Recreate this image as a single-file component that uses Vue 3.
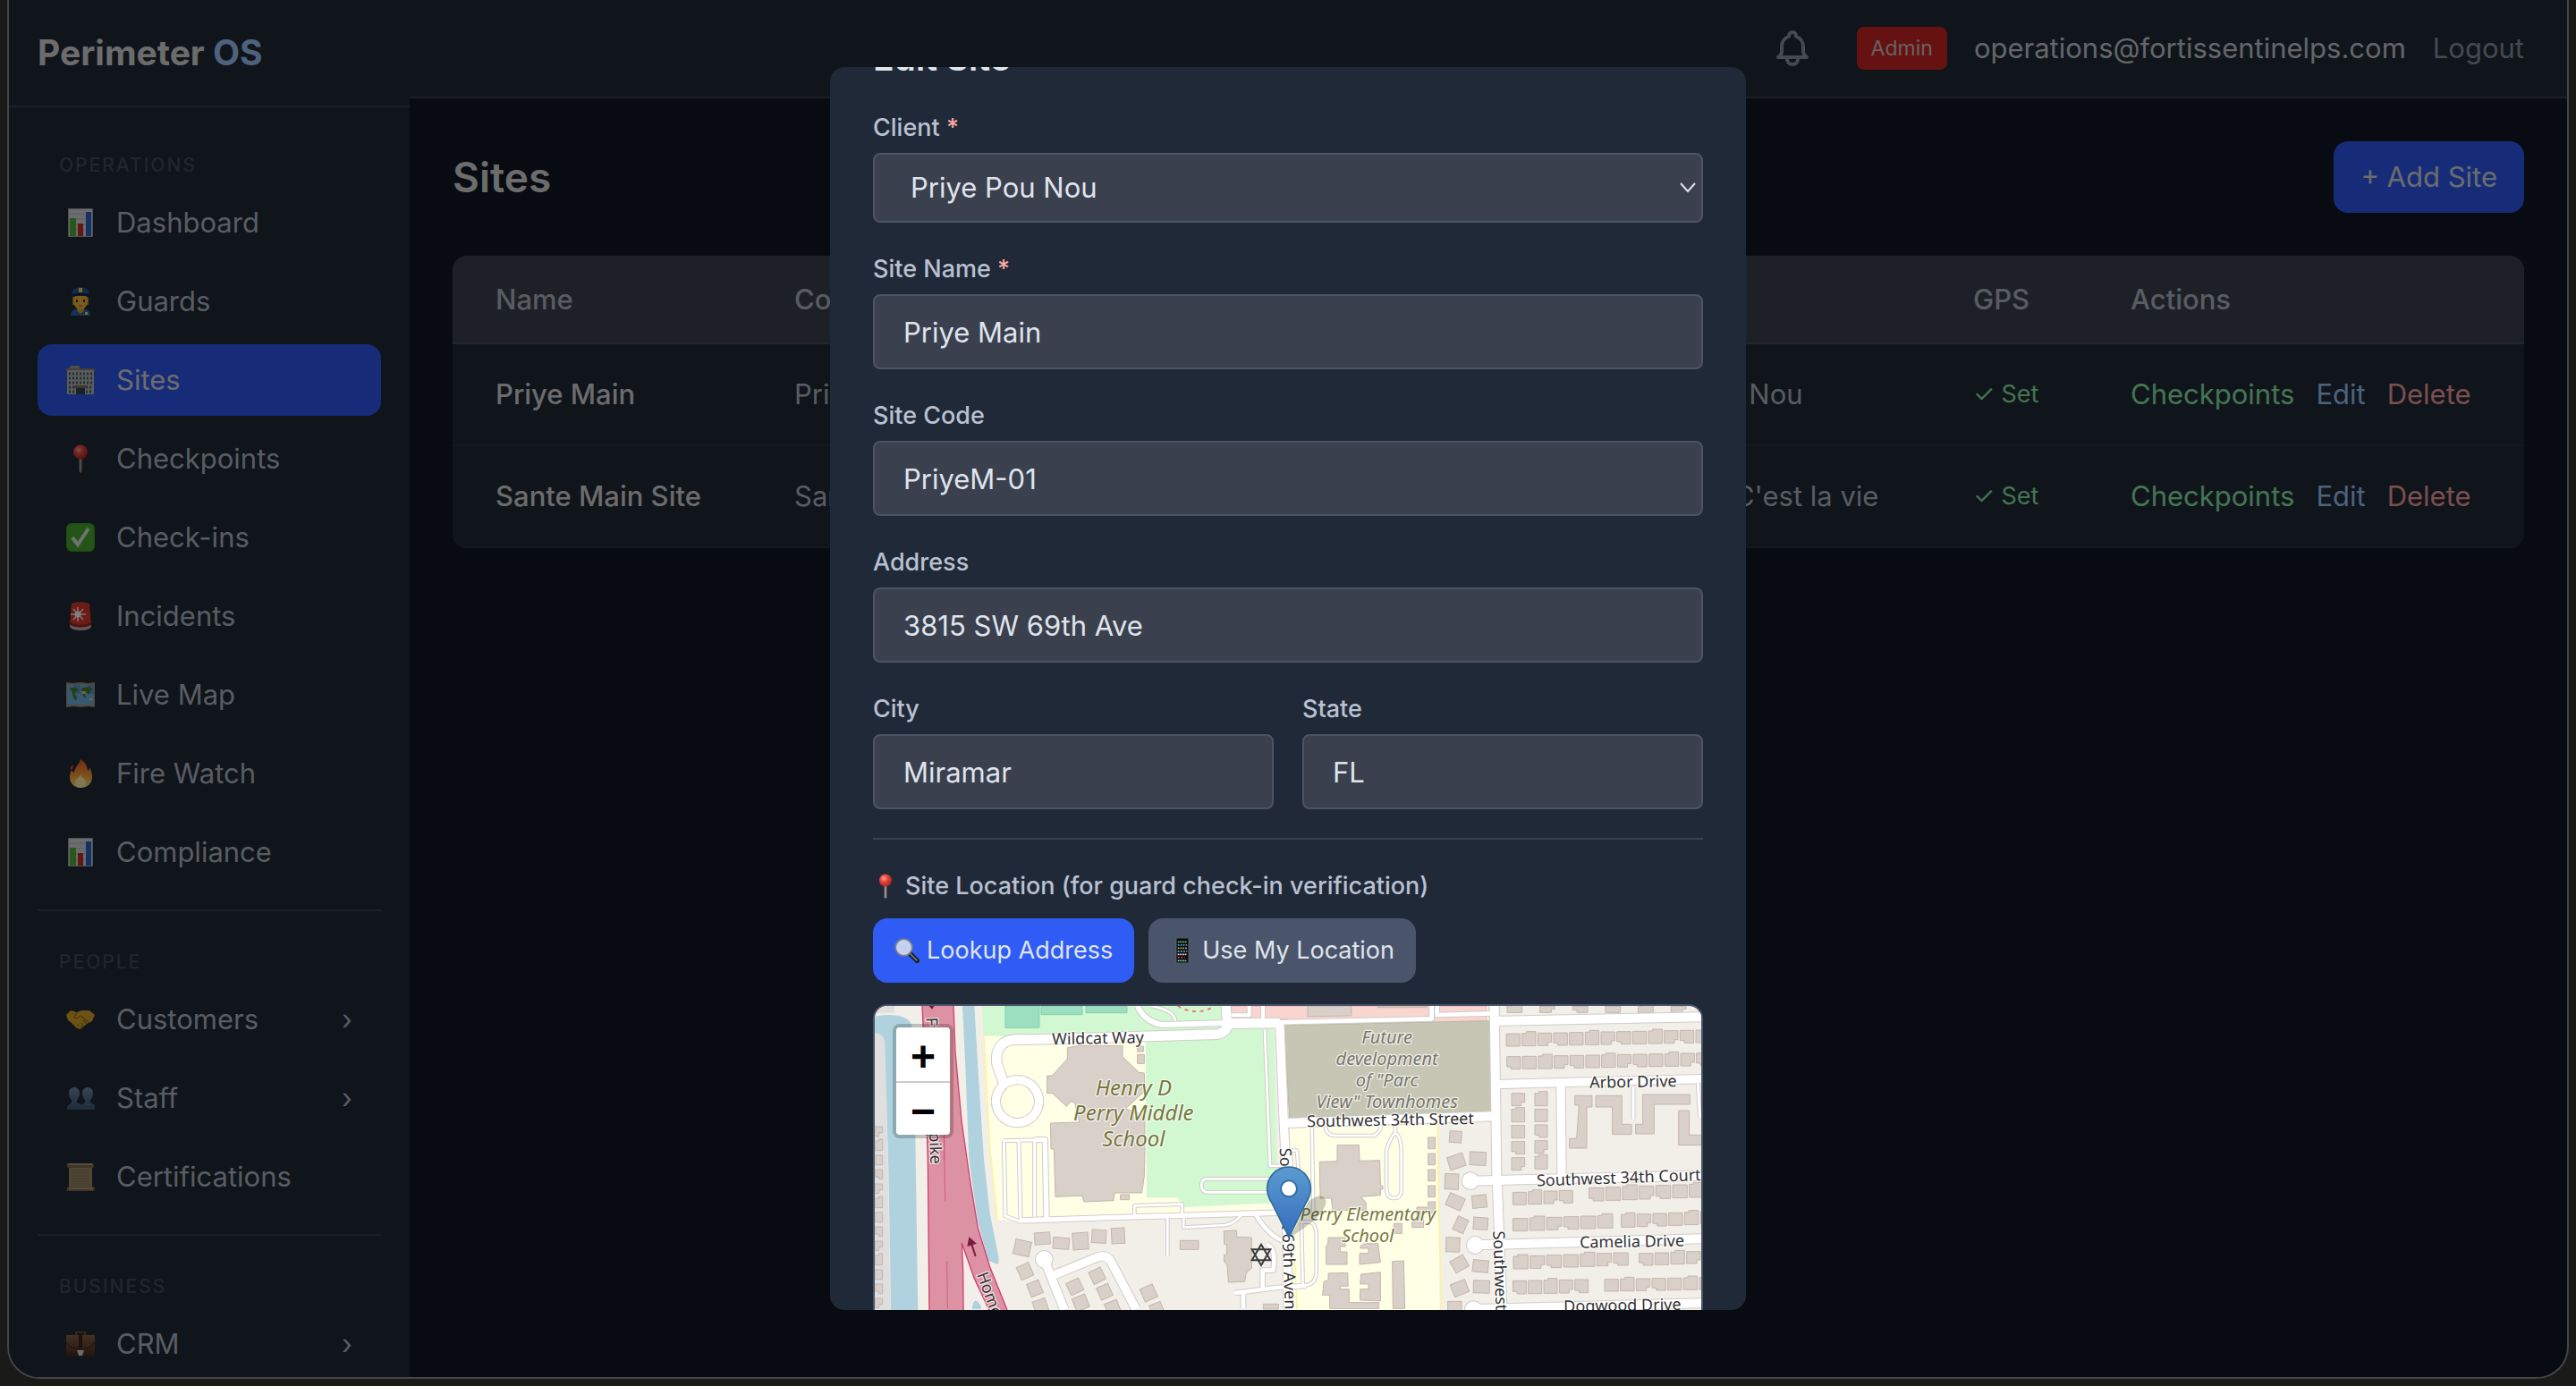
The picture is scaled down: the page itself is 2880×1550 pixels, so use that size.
<script setup>
import { ref, onMounted } from 'vue'

const modal = ref(null)
const form = ref({
  client: 'Priye Pou Nou',
  name: 'Priye Main',
  code: 'PriyeM-01',
  address: '3815 SW 69th Ave',
  city: 'Miramar',
  state: 'FL',
})

onMounted(() => {
  modal.value.scrollTop = 88
})

const sections = [
  {
    title: 'Operations',
    items: [
      { label: 'Dashboard', icon: 'chart' },
      { label: 'Guards', icon: 'guard' },
      { label: 'Sites', icon: 'building', active: true },
      { label: 'Checkpoints', icon: 'pin' },
      { label: 'Check-ins', icon: 'check' },
      { label: 'Incidents', icon: 'siren' },
      { label: 'Live Map', icon: 'worldmap' },
      { label: 'Fire Watch', icon: 'fire' },
      { label: 'Compliance', icon: 'chart' },
    ],
  },
  {
    title: 'People',
    items: [
      { label: 'Customers', icon: 'handshake', children: true },
      { label: 'Staff', icon: 'people', children: true },
      { label: 'Certifications', icon: 'scroll' },
    ],
  },
  {
    title: 'Business',
    items: [{ label: 'CRM', icon: 'briefcase', children: true }],
  },
]

const sites = [
  { name: 'Priye Main', code: 'PriyeM-01', client: 'Priye Pou Nou' },
  { name: 'Sante Main Site', code: 'SanteM-01', client: "Sante — C'est la vie" },
]

// Map geometry: [path, road width]
const roads = [
  ['M485 300L464 240C455 180 490 158 530 158L650 156L1200 140Q1236 135 1240 100', 32],
  ['M1232 45L1236 104', 30],
  ['M935 45Q960 100 1020 108L1240 102', 18],
  ['M980 45Q1060 60 1062 95', 8],
  ['M1240 104L1412 102', 32],
  ['M1310 45V76H1250M1356 45V90', 12],
  ['M533 293A72 72 0 1 1 532 293', 28],
  ['M1412 95L1426 440L1434 600L1440 1060', 28],
  ['M1412 100L1922 88V45', 14],
  ['M1940 45V75L2130 70', 14],
  ['M1426 438L2130 415', 30],
  ['M2132 45L2140 600L2158 1060', 30],
  ['M2130 96L2830 82', 30],
  ['M2130 308L2830 290', 28],
  ['M2355 310L2358 615', 28],
  ['M2052 632L2830 614', 30],
  ['M2068 847L2830 826', 30],
  ['M2068 1062L2830 1042', 30],
  ['M540 765L840 755L1430 738', 16],
  ['M485 497L590 494V752M537 500L543 762M487 497L492 750L540 768', 9],
  ['M590 494H625L630 760', 16],
  ['M925 745V715L1085 710V740', 8],
  ['M1036 750V885M1090 750V788L1230 780Q1260 775 1282 748', 8],
  ['M622 895L690 1065', 28],
  ['M650 950L800 888Q835 875 850 910L930 1062', 28],
  ['M1390 625H1165Q1148 628 1150 650Q1152 670 1170 670H1390', 8],
  ['M1362 125L1380 582L1450 580V530H1470L1475 600', 8],
  ['M1330 742Q1370 810 1420 832', 14],
  ['M1260 1008L1400 990L1500 984M1290 1005V1060', 14],
  ['M1355 1000V932H1390Q1402 860 1370 845', 14],
  ['M1565 450Q1570 480 1600 480H1730Q1755 460 1750 448M1520 440L1525 740', 8],
  ['M1770 640V530Q1785 480 1800 472Q1818 480 1820 530V670Q1815 690 1795 690Q1770 690 1770 650V640M1800 475V445', 8],
  ['M1485 770L1490 980M1485 770H1515Q1535 780 1535 810V940Q1530 985 1490 982L1460 985', 8],
  ['M2598 318V425M2815 305L2822 420', 9],
]

const culs = [
  [622, 895],
  [2052, 632],
  [2068, 847],
  [2062, 1064],
]

const bigBuildings = [
  'M700 185L740 178H885V215L940 268L958 270L960 330L895 390L960 412V540L958 615L950 672H858L855 698L755 702L750 682L660 685L655 525H645L643 438L740 435L725 370L712 365L697 382L650 338H632V280L650 278L700 222Z',
  'M935 180H955V198H935ZM935 208H958V238H935ZM878 678H908V695H878Z',
  'M1605 512H1678L1680 565L1748 563L1750 645L1758 650V660H1750V680L1685 685L1702 705V730H1590L1585 690H1548L1546 568L1605 566Z',
  'M1575 822H1632V852H1615V870H1638V912H1568V850Q1575 848 1575 822ZM1682 858Q1682 845 1700 842H1742L1750 905L1680 912V875H1710V858Z',
  'M1575 942L1640 940L1642 985H1615V995H1645V1040H1745V1060H1580V1015H1556L1560 970L1575 965ZM1685 945L1750 938V1035L1682 1032V995H1710V978H1682Z',
  'M1790 902L1828 900L1832 1060H1792ZM1872 720H1905V740H1895V788H1856V768H1872ZM1795 775H1822V808H1795Z',
  'M1225 800L1268 798V820L1318 822V925L1300 940L1295 970L1240 972L1236 912L1226 905V880L1235 878V845H1226Z',
  'M1078 832H1140V862H1078ZM1357 1045H1408V1062H1357Z',
  'M2402 346H2460V384H2442V522H2384V490H2408L2416 378H2402ZM2472 346H2560V442H2592V476H2528V384H2472ZM2630 342H2788V375H2668V474H2606V442H2630ZM2750 396H2786V478H2830V512H2750Z',
  'M1506 45H1652V78L1506 80ZM1740 45H1905V50H1740Z',
]

// Rows of detached houses: [x, y, step, count, height, slope]
const rows = [
  [2175, 45, 110, 6, 22, 0],
  [2172, 138, 53, 13, 42, -1],
  [2174, 215, 53, 13, 42, -1],
  [2194, 670, 52, 4, 42, -2],
  [2450, 655, 56, 7, 44, -2],
  [2194, 758, 57, 6, 42, -2],
  [2558, 745, 53, 6, 42, -2],
  [2196, 885, 56, 7, 42, -2],
  [2618, 875, 53, 5, 40, -2],
  [2194, 967, 52, 5, 44, -1],
  [2502, 962, 53, 7, 40, -1],
]
const shapes = [
  (w, h) => `h${w}v${h - 12}h-12v12h-${w - 12}z`,
  (w, h) => `v${h}h${w}v-${h + 6}h-${w - 14}v6z`,
  (w, h) => `h${w}v${h}h-${w}z`,
  (w, h) => `v${h - 8}h14v8h${w - 14}v-${h}z`,
]
const houses = []
rows.forEach(([x, y, step, count, h, slope]) => {
  for (let i = 0; i < count; i++) {
    houses.push(`M${x + i * step} ${y + i * slope}${shapes[(i * 7 + y) % 4](Math.min(step - 7, 50), h)}`)
  }
})
for (let i = 0; i < 5; i++) {
  houses.push(`M2190 ${338 + i * 54}${shapes[i % 4](44, 42)}`)
  houses.push(`M2268 ${338 + i * 53}${shapes[(i + 1) % 4](42, 42)}`)
}
for (let i = 0; i < 5; i++) houses.push(`M1910 ${486 + i * 54}h24v38h-24z`)
for (let i = 0; i < 13; i++) houses.push(`M54 ${450 + i * 48}${shapes[i % 4](26, 32)}`)

// Houses turned to follow the street: [x, y, w, h, angle]
const turned = [
  [522, 832, 54, 50, 12], [590, 805, 52, 40, -4], [652, 822, 54, 38, 4], [718, 806, 52, 56, -4],
  [782, 796, 48, 44, 4], [848, 790, 44, 52, -3], [536, 912, 44, 46, -24], [570, 970, 42, 46, -22],
  [588, 1030, 44, 44, -20], [702, 965, 46, 44, -26], [722, 1018, 46, 46, -22], [778, 928, 44, 44, -26],
  [804, 982, 42, 44, -24], [830, 1036, 44, 44, -22], [950, 985, 46, 46, -24], [980, 1042, 40, 40, -22],
  [1982, 465, 40, 38, 4], [1978, 545, 54, 44, -18], [2050, 535, 54, 44, 3], [1966, 608, 46, 52, 2],
  [1974, 680, 54, 44, 24], [2058, 680, 48, 42, -6], [2000, 755, 38, 48, 24], [2062, 755, 48, 40, 4],
  [1970, 822, 46, 48, 2], [1990, 888, 50, 44, -30], [2060, 898, 52, 40, 6], [1990, 970, 52, 44, -22],
  [2062, 966, 54, 42, 2], [1976, 1036, 46, 40, 0],
]

const labels = [
  { x: 803, y: 172, t: 'Wildcat Way', r: -1 },
  { x: 1784, y: 446, t: 'Southwest 34th Street', r: -1 },
  { x: 2598, y: 318, t: 'Arbor Drive', r: -1 },
  { x: 2550, y: 640, t: 'Southwest 34th Court', r: -2 },
  { x: 2594, y: 854, t: 'Camelia Drive', r: -1 },
  { x: 2562, y: 1068, t: 'Dogwood Drive', r: -1 },
]
</script>

<template>
  <svg class="sprite" aria-hidden="true">
    <defs>
      <linearGradient id="gFire" x1="0" y1="0" x2="0" y2="1">
        <stop offset="0" stop-color="#f0502a" /><stop offset=".55" stop-color="#fb9a34" /><stop offset="1" stop-color="#ffe27a" />
      </linearGradient>
      <linearGradient id="gPeople" x1="0" y1="0" x2="0" y2="1">
        <stop offset="0" stop-color="#6f8ba3" /><stop offset="1" stop-color="#3a5676" />
      </linearGradient>
      <radialGradient id="gBall" cx=".38" cy=".35" r=".7">
        <stop offset="0" stop-color="#ff9a8c" /><stop offset=".45" stop-color="#e0433b" /><stop offset="1" stop-color="#a82222" />
      </radialGradient>
      <linearGradient id="gCase" x1="0" y1="0" x2="0" y2="1">
        <stop offset="0" stop-color="#8a6248" /><stop offset="1" stop-color="#43281b" />
      </linearGradient>
      <linearGradient id="gMarker" x1="0" y1="0" x2="0" y2="1">
        <stop offset="0" stop-color="#5b9bd0" /><stop offset="1" stop-color="#356dbf" />
      </linearGradient>
    </defs>
    <symbol id="chart" viewBox="0 0 32 32">
      <path fill="#d4d8de" stroke="#9a9fa8" d="M2.500.5h27v31h-27z" />
      <path stroke="#b4bac4" d="M3 6h26M3 12h26M3 18h26M3 24h26" />
      <path fill="#4fae35" d="M4 11h7v20H4z" /><path fill="#c62b23" d="M13 17h6v14h-6z" /><path fill="#2a62c8" d="M22 4h6v27h-6z" />
    </symbol>
    <symbol id="guard" viewBox="0 0 32 32">
      <path fill="#2c62a8" d="M5 32c0-6 4-8 11-8s11 2 11 8z" /><path fill="#d99f26" d="M12 21h8v5l-4 4-4-4z" />
      <path fill="#b07f22" d="M7 10h18v10H7z" /><ellipse cx="16" cy="16" rx="8" ry="9" fill="#f2b937" />
      <path fill="#24549a" d="M6 6c2-4 6-6 10-6s8 2 10 6l-2 4H8z" /><path fill="#12254a" d="M7 8c6-2 12-2 18 0v3c-6-2-12-2-18 0z" />
      <path fill="#f6d24a" d="M14 1h4v5h-4z" /><path stroke="#3a2b14" stroke-width="2" d="M12 14v3M20 14v3" /><path stroke="#8a5a1c" d="M14 21h4" />
      <path fill="#f6d24a" d="M21 28h3v3h-3z" />
    </symbol>
    <symbol id="building" viewBox="0 0 32 32">
      <path fill="#9b9a98" d="M4 0h11v4H4z" /><path fill="#8a7f7a" d="M0 3h32v3H0z" /><path fill="#b9b6ae" d="M1 5h30v27H1z" />
      <path stroke="#44607c" stroke-width="3" stroke-dasharray="2 2" d="M3 9h27M3 14h27M3 19h27M3 24h7M22 24h8M3 29h7M22 29h8" />
      <path fill="#7d6f68" d="M9 22h14v3H9z" /><path fill="#33434f" d="M11 25h10v7H11z" />
    </symbol>
    <symbol id="pin" viewBox="0 0 32 32">
      <path fill="#9b8f8c" d="M14.500 14h3v16l-1.500 2-1.500-2z" /><circle cx="16" cy="8.500" r="8" fill="url(#gBall)" />
    </symbol>
    <symbol id="check" viewBox="0 0 32 32">
      <rect width="32" height="32" rx="6" fill="#3f9b28" /><rect x="1.500" y="1.500" width="29" height="29" rx="5" fill="#4ba831" />
      <path fill="none" stroke="#e2e2e2" stroke-width="4" d="M7 16l6 8L25 6" />
    </symbol>
    <symbol id="siren" viewBox="0 0 32 32">
      <path fill="#b9b4b2" d="M4 24h24v4q-2 4-12 4T4 28z" /><path fill="#d6392c" d="M6 2q10-4 20 0l2 23q-12 6-24 0z" />
      <path fill="#a42119" d="M4 23q12 6 24 0v3q-12 5-24 0z" />
      <path stroke="#ffe9e4" stroke-width="1.600" d="M13 6v16M5 14h17M8 8l11 12M19 8L8 20" /><circle cx="13" cy="14" r="3.500" fill="#fff" />
    </symbol>
    <symbol id="worldmap" viewBox="0 0 32 32">
      <path fill="#a58d6a" d="M0 2l8 1 8-1 8 1 8-1v28l-8-1-8 1-8-1-8 1z" /><path fill="#6fb0dc" d="M1 4l7 1 8-1 8 1 7-1v24l-7-1-8 1-8-1-7 1z" />
      <path fill="#5389bd" d="M8 5l8-1v11H8zM24 5l7-1v11h-7z" opacity=".6" />
      <path fill="#4d7c31" d="M4 8l8 0 1 3-4 4 3 3-1 5-3-4-2-7zM18 8l8-1 3 2-3 6-5-2 1 8-3-4-2-6z" /><path fill="#d9cf8e" d="M17 12h5l-1 3h-3zM26 20h4v2h-4z" />
    </symbol>
    <symbol id="fire" viewBox="0 0 32 32">
      <path fill="url(#gFire)" d="M16 0c5 3 8 8 8 13 1 0 2-2 2-4 2 3 3 7 3 11 0 8-6 12-13 12S4 27 4 20c0-3 1-6 2-8 1 2 2 3 3 3 0-6 6-9 7-15z" />
      <path fill="#fff0a8" d="M16 17c1 4 6 5 6 9s-3 6-6 6-6-2-6-6 5-5 6-9z" /><path fill="#e2532c" d="M5 9l3-3-1 5-2 1z" />
    </symbol>
    <symbol id="handshake" viewBox="0 0 32 32">
      <path fill="#d9a42b" d="M0 11l5-5 7 2 5-2 9 0 6 5-3 7-6 3-7 6-4-1-6-6-4-3z" />
      <path fill="none" stroke="#9c6d14" stroke-width="1.200" d="M12 8l-3 6q4 2 7-2l10 8M12 24l2-3M16 26l2-3M20 24l-3-4M23 21l-4-4" />
    </symbol>
    <symbol id="people" viewBox="0 0 32 32">
      <path fill="url(#gPeople)" d="M9 4c4 0 6 3 6 7 0 3-1 5-3 7v3l6 3v5H1v-4l5-4v-3c-2-2-3-4-3-7 0-4 2-7 6-7z" />
      <path fill="url(#gPeople)" d="M24 4c4 0 6 3 6 7 0 3-1 5-3 7v3l5 3v5H16v-4l5-4v-3c-2-2-3-4-3-7 0-4 2-7 6-7z" />
    </symbol>
    <symbol id="scroll" viewBox="0 0 32 32">
      <path fill="#a0886a" d="M3 4h26v24H3z" /><path fill="#80684c" d="M1 1h29q2 3 0 5H2Q0 4 1 1zM2 27h29q2 3 0 5H1q-1-3 1-5z" />
      <path fill="#b49c7c" d="M3 1h26v2H3zM3 28h27v2H3z" /><path stroke="#8d7659" d="M6 9h20M6 12h20M6 15h20M6 18h20M6 21h20M6 24h20" />
    </symbol>
    <symbol id="briefcase" viewBox="0 0 32 32">
      <path fill="none" stroke="#7d5a3c" stroke-width="1.600" d="M11 6V3h10v3" /><path fill="url(#gCase)" d="M0 6h32v24H0z" />
      <path fill="#3a2317" d="M14 6h4v14h-4z" /><path fill="none" stroke="#3a2317" d="M0 14q4 7 13 7h6q9 0 13-7" /><path fill="#dcd6d0" d="M12 23h8l-2 6h-4z" />
    </symbol>
    <symbol id="magnifier" viewBox="0 0 32 32">
      <path stroke="#1c1c20" stroke-width="6" stroke-linecap="round" d="M21 21l8 8" /><path stroke="#777b84" stroke-width="2" d="M20 20l9 9" />
      <circle cx="12" cy="12" r="10.500" fill="#c2d0f4" stroke="#7b808c" stroke-width="2.500" /><circle cx="12" cy="12" r="9" fill="none" stroke="#d9dde6" />
    </symbol>
    <symbol id="phone" viewBox="0 0 32 32">
      <rect x="8" y="0" width="16" height="32" rx="1" fill="#0a0a0c" stroke="#686868" />
      <path stroke="#5fd06a" stroke-width="2" stroke-dasharray="2 1" d="M10 5h12" /><path stroke="#4fa8e8" stroke-width="2" stroke-dasharray="2 1.400" d="M10 9h12" />
      <path stroke="#b9b26a" stroke-width="2" stroke-dasharray="2 1.200" d="M10 13h12" /><path stroke="#63b8d8" stroke-width="2" stroke-dasharray="2 1.600" d="M10 17h12" />
      <path stroke="#e8e0e0" stroke-width="2" stroke-dasharray="2 1" d="M10 21h12" /><path stroke="#d0405a" stroke-width="2" stroke-dasharray="2 2" d="M10 25h9" />
      <path stroke="#7fe09a" stroke-width="2" stroke-dasharray="2 1" d="M10 29h12" />
    </symbol>
  </svg>

  <div class="window">
    <aside class="sidebar">
      <div class="brand">Perimeter <span>OS</span></div>
      <nav>
        <section v-for="s in sections" :key="s.title" class="group">
          <h2>{{ s.title }}</h2>
          <a v-for="i in s.items" :key="i.label" href="#" class="item" :class="{ active: i.active }">
            <svg class="icon"><use :href="'#' + i.icon" /></svg>
            <span class="item-label">{{ i.label }}</span>
            <span v-if="i.children" class="chev">›</span>
          </a>
        </section>
      </nav>
    </aside>

    <div class="page">
      <header class="topbar">
        <button class="bell" aria-label="Notifications">
          <svg viewBox="0 0 24 24" fill="none" stroke="currentColor" stroke-width="2" stroke-linecap="round" stroke-linejoin="round">
            <path d="M15 17h5l-1.405-1.405A2.032 2.032 0 0118 14.158V11a6.002 6.002 0 00-4-5.659V5a2 2 0 10-4 0v.341C7.670 6.165 6 8.388 6 11v3.159c0 .538-.214 1.055-.595 1.436L4 17h5m6 0v1a3 3 0 11-6 0v-1m6 0H9" />
          </svg>
        </button>
        <span class="badge">Admin</span>
        <span class="email">operations@fortissentinelps.com</span>
        <button class="logout">Logout</button>
      </header>
      <main>
        <div class="title-row">
          <h1>Sites</h1>
          <button class="add">+ Add Site</button>
        </div>
        <div class="card">
          <table>
            <thead>
              <tr>
                <th class="c-name">Name</th>
                <th>Code</th>
                <th class="c-client">Client</th>
                <th class="c-gps">GPS</th>
                <th class="c-actions">Actions</th>
              </tr>
            </thead>
            <tbody>
              <tr v-for="s in sites" :key="s.name">
                <td class="strong">{{ s.name }}</td>
                <td>{{ s.code }}</td>
                <td>{{ s.client }}</td>
                <td class="set">✓ Set</td>
                <td>
                  <div class="actions">
                    <a href="#" class="green">Checkpoints</a>
                    <a href="#" class="blue">Edit</a>
                    <a href="#" class="red">Delete</a>
                  </div>
                </td>
              </tr>
            </tbody>
          </table>
        </div>
      </main>
    </div>

    <div class="overlay">
      <div ref="modal" class="modal" role="dialog" aria-labelledby="edit-title">
        <h2 id="edit-title">Edit Site</h2>
        <form @submit.prevent>
          <div class="field">
            <label for="client">Client <em>*</em></label>
            <div class="select">
              <select id="client" v-model="form.client">
                <option>Priye Pou Nou</option>
              </select>
              <svg viewBox="0 0 18 12" fill="none" stroke="#dfe4ec" stroke-width="2"><path d="M1 1l8 9 8-9" /></svg>
            </div>
          </div>
          <div class="field">
            <label for="name">Site Name <em>*</em></label>
            <input id="name" v-model="form.name" type="text" />
          </div>
          <div class="field">
            <label for="code">Site Code</label>
            <input id="code" v-model="form.code" type="text" />
          </div>
          <div class="field">
            <label for="address">Address</label>
            <input id="address" v-model="form.address" type="text" />
          </div>
          <div class="pair">
            <div class="field">
              <label for="city">City</label>
              <input id="city" v-model="form.city" type="text" />
            </div>
            <div class="field">
              <label for="state">State</label>
              <input id="state" v-model="form.state" type="text" />
            </div>
          </div>
          <div class="location">
            <div class="caption">
              <svg class="icon-s"><use href="#pin" /></svg>
              Site Location (for guard check-in verification)
            </div>
            <div class="buttons">
              <button type="button" class="primary"><svg class="icon-s"><use href="#magnifier" /></svg>Lookup Address</button>
              <button type="button" class="secondary"><svg class="icon-s"><use href="#phone" /></svg>Use My Location</button>
            </div>
            <div class="map">
              <svg class="tiles" viewBox="54 45 2772 1500" preserveAspectRatio="xMinYMin slice">
                <path fill="#f2efe9" d="M0 0h2900v1600H0z" />
                <path fill="#dfdfdf" d="M54 45h66v23H54zM54 130L90 150L98 600L118 1600H54z" />
                <path fill="#b0d2de" d="M54 80C100 70 172 72 180 115L190 480L207 1600H118L100 600L88 165Q85 138 54 135ZM348 45H388L400 250L420 560L440 740L470 890L468 912L435 900L400 770L370 560L358 250ZM380 1062Q384 1030 396 1034L410 1050V1062Z" />
                <path fill="#ffffe5" d="M418 142L965 160V688H1075L1092 715L1420 706V738L1100 742L540 768L465 762L440 520ZM1445 452L1940 444L1945 700L1955 1600H1470Z" />
                <path fill="none" stroke="#fbf3a0" stroke-width="5" d="M420 145L440 520L465 762M1942 446L1946 700L1955 1062M1470 1062L1462 900" />
                <path fill="#d1f8d0" d="M415 45H1220L1215 100L1250 120L1392 122L1405 706L1092 720L1070 688H967L962 160L418 145Z" />
                <path fill="#9bdfc0" stroke="#86cfae" stroke-width="3" d="M492 45H606V118H492ZM612 45H750V74H612ZM762 45H900V68H762Z" />
                <path fill="none" stroke="#e77c80" stroke-width="6" stroke-dasharray="12 14" d="M1070 45Q1130 80 1190 48" />
                <path fill="#f8d5cf" stroke="#f0b6ae" stroke-width="3" d="M1250 45H2105V95L1440 112V88H1250Z" />
                <path fill="#c5c6b3" stroke="#b8b9a4" stroke-width="3" d="M1428 110L2117 95L2125 402L1445 420Z" />
                <path fill="#dc92a3" stroke="#d2416f" stroke-width="4" d="M213 40H318L324 200L345 430L372 620L400 790L440 920L500 1070H440L388 960L346 840L350 930L356 1600H242L232 560L222 250Z" />
                <path fill="none" stroke="#d2416f" stroke-width="2" d="M286 430L290 700M296 900L298 1060M286 480V560" />
                <path fill="none" stroke="#7b1c3e" stroke-width="6" d="M392 885L376 835" /><path fill="#7b1c3e" d="M370 820L396 842L364 852ZM236 45H254L246 56Z" />

                <g fill="#d9d0c9" stroke="#c4b6ab" stroke-width="3">
                  <path v-for="b in bigBuildings" :key="b" :d="b" />
                  <path v-for="h in houses" :key="h" :d="h" />
                  <rect v-for="(t, n) in turned" :key="n" :x="t[0]" :y="t[1]" :width="t[2]" :height="t[3]" :transform="`rotate(${t[4]} ${t[0] + t[2] / 2} ${t[1] + t[3] / 2})`" />
                </g>

                <g fill="none" stroke="#cfcdca" stroke-linejoin="round">
                  <path v-for="r in roads" :key="r[0]" :d="r[0]" :stroke-width="r[1] + 6" />
                  <circle v-for="c in culs" :key="c[0]" :cx="c[0]" :cy="c[1]" r="31" fill="#cfcdca" stroke="none" />
                </g>
                <g fill="none" stroke="#fff" stroke-linejoin="round">
                  <path v-for="r in roads" :key="r[0]" :d="r[0]" :stroke-width="r[1]" />
                  <circle v-for="c in culs" :key="c[0]" :cx="c[0]" :cy="c[1]" r="28" fill="#fff" stroke="none" />
                </g>

                <g fill="none" stroke="#3a3a3a" stroke-width="6">
                  <path d="M1350 845L1381 898H1319ZM1350 915L1381 862H1319Z" />
                </g>

                <g class="road-names">
                  <text v-for="l in labels" :key="l.t" :x="l.x" :y="l.y" :transform="`rotate(${l.r} ${l.x} ${l.y})`">{{ l.t }}</text>
                  <text class="start" transform="translate(2128 800) rotate(88)">Southwest 69th Way</text>
                  <text class="start" transform="translate(1412 522) rotate(88)">So</text>
                  <text class="start" transform="translate(1420 776) rotate(88)">t 69th Avenue</text>
                  <text class="start" transform="translate(226 84) rotate(88)">F</text>
                  <text class="start" transform="translate(236 436) rotate(88)">npike</text>
                  <text class="start" transform="translate(396 946) rotate(70)">Homestead</text>
                </g>
                <g class="place">
                  <text x="922" y="344">Henry D</text><text x="922" y="430">Perry Middle</text><text x="922" y="516">School</text>
                </g>
                <g class="place minor">
                  <text x="1708" y="766">Perry Elementary</text><text x="1708" y="836">School</text>
                </g>
                <g class="place minor future">
                  <text x="1772" y="171">Future</text><text x="1772" y="242">development</text>
                  <text x="1772" y="315">of "Parc</text><text x="1772" y="386">View" Townhomes</text>
                </g>

                <path fill="#000" opacity=".2" d="M1446 822L1510 700Q1555 665 1568 700Q1565 750 1446 822Z" />
                <path fill="url(#gMarker)" stroke="#2e6c9f" stroke-width="5" d="M1443 820L1386 706C1374 688 1370 674 1370 658A73 73 0 0 1 1516 658C1516 674 1512 688 1500 706Z" />
                <circle cx="1443" cy="658" r="27" fill="#fff" stroke="#316fa8" stroke-width="6" />
              </svg>
              <div class="zoom">
                <button type="button" aria-label="Zoom in">+</button>
                <button type="button" aria-label="Zoom out">−</button>
              </div>
            </div>
          </div>
        </form>
      </div>
    </div>
  </div>
</template>

<style>
body {
  margin: 0;
  background: #1a1b19;
  overflow: hidden;
}
</style>

<style scoped>
* {
  box-sizing: border-box;
}
.sprite {
  position: absolute;
  width: 0;
  height: 0;
}
.window {
  position: relative;
  display: flex;
  height: calc(100vh - 8px);
  margin: 0 8px 8px;
  border: 2px solid #444547;
  border-top: 0;
  border-radius: 0 0 36px 36px;
  overflow: hidden;
  background: #101624;
  color: #b3b8c5;
  font-family: Inter, 'Liberation Sans', sans-serif;
  font-size: 31px;
  line-height: 48px;
}
button,
input,
select {
  margin: 0;
  border: 0;
  font: inherit;
  color: inherit;
}
button {
  cursor: pointer;
}
a {
  color: inherit;
  text-decoration: none;
}

.sidebar {
  flex: 0 0 448px;
  background: #202937;
  overflow: hidden;
}
.brand {
  height: 120px;
  padding: 31px 32px 0;
  border-bottom: 2px solid #374151;
  font-size: 39px;
  font-weight: 700;
  line-height: 56px;
  color: #d8d8da;
}
.brand span {
  color: #9cc4f8;
}
nav {
  padding: 32px;
}
.group + .group {
  margin-top: 24px;
  padding-top: 24px;
  border-top: 2px solid #374151;
}
.group h2 {
  margin: 0;
  padding: 16px 24px 8px;
  font-size: 21px;
  font-weight: 500;
  line-height: 33px;
  letter-spacing: 2px;
  text-transform: uppercase;
  color: #454c59;
}
.item {
  display: flex;
  align-items: center;
  gap: 24px;
  height: 80px;
  padding: 0 32px;
  border-radius: 16px;
}
.item + .item {
  margin-top: 8px;
}
.item.active {
  background: #2e58f2;
  color: #d8d8da;
}
.item-label {
  flex: 1;
}
.icon {
  width: 32px;
  height: 32px;
}
.icon-s {
  width: 28px;
  height: 28px;
}

.page {
  flex: 1;
  min-width: 0;
}
.topbar {
  display: flex;
  align-items: center;
  justify-content: flex-end;
  gap: 30px;
  height: 110px;
  padding: 0 48px;
  background: #202937;
  border-bottom: 2px solid #374151;
}
.bell {
  display: flex;
  margin-right: 18px;
  padding: 0;
  background: none;
  color: #8b92a2;
}
.bell svg {
  width: 48px;
  height: 48px;
}
.badge {
  padding: 0 16px;
  border-radius: 8px;
  background: #cc2424;
  color: #d0c4c6;
  font-size: 23px;
}
.email {
  color: #c8ccd4;
}
.logout {
  padding: 0;
  background: none;
  color: #8b92a2;
}
main {
  padding: 48px;
}
.title-row {
  display: flex;
  align-items: center;
  justify-content: space-between;
  margin-bottom: 48px;
}
h1 {
  margin: 0;
  font-size: 46px;
  font-weight: 600;
  color: #d8d8da;
}
.add {
  height: 80px;
  padding: 0 30px;
  border-radius: 16px;
  background: #2e58f2;
  color: #d8d8da;
}
.card {
  border-radius: 16px;
  overflow: hidden;
  background: #202937;
}
table {
  width: 100%;
  table-layout: fixed;
  border-collapse: collapse;
}
th,
td {
  padding: 0 0 0 48px;
  text-align: left;
  white-space: nowrap;
  border-bottom: 2px solid #29323f;
}
th {
  height: 98px;
  background: #3b424f;
  font-weight: 500;
  border-color: #454c59;
}
td {
  height: 114px;
}
.c-name {
  width: 334px;
}
.c-client {
  width: 399px;
}
.c-gps {
  width: 176px;
}
.c-actions {
  width: 488px;
}
.strong {
  font-weight: 500;
  color: #d8d8da;
}
.set {
  font-size: 27px;
  color: #8aeaa6;
}
.actions {
  display: flex;
  gap: 24px;
}
.green {
  color: #8aeaa6;
}
.blue {
  color: #9ac4fc;
}
.red {
  color: #f69ea0;
}

.overlay {
  position: absolute;
  inset: 0;
  display: flex;
  align-items: center;
  justify-content: center;
  background: rgba(0, 0, 0, 0.5);
}
.modal {
  width: 1024px;
  max-width: 100%;
  max-height: calc(90% + 4px);
  padding: 48px;
  border-radius: 16px;
  background: #202937;
  color: #dfe4ec;
  overflow-y: auto;
  scrollbar-width: none;
}
.modal h2 {
  margin: 0 0 28px;
  font-size: 39px;
  font-weight: 600;
  line-height: 60px;
}
form {
  display: flex;
  flex-direction: column;
  gap: 32px;
}
.field {
  display: flex;
  flex-direction: column;
  gap: 8px;
}
label,
.caption {
  font-size: 27px;
  font-weight: 500;
  line-height: 40px;
  color: #b9c1d1;
}
label em {
  font-style: normal;
  color: #f9a8a4;
}
.field input,
.field select {
  width: 100%;
  height: 84px;
  padding: 0 32px;
  border: 2px solid #4a5565;
  border-radius: 8px;
  background: #3b404f;
}
.select {
  position: relative;
  display: flex;
}
.field select {
  height: 78px;
  padding: 0 40px;
  appearance: none;
}
.select svg {
  position: absolute;
  right: 8px;
  top: 33px;
  width: 18px;
  height: 12px;
  pointer-events: none;
}
.pair {
  display: grid;
  grid-template-columns: 1fr 1fr;
  gap: 32px;
}
.location {
  padding-top: 32px;
  border-top: 2px solid #374151;
}
.caption {
  display: flex;
  align-items: center;
  gap: 8px;
}
.buttons {
  display: flex;
  gap: 16px;
  margin: 16px 0 24px;
}
.buttons button {
  display: flex;
  align-items: center;
  gap: 8px;
  height: 72px;
  padding: 0 24px;
  border-radius: 16px;
  font-size: 27px;
}
.primary {
  background: #2f5cf5;
}
.secondary {
  background: #4a556b;
}
.map {
  position: relative;
  height: 504px;
  border: 2px solid #4a556b;
  border-radius: 16px;
  overflow: hidden;
}
.tiles {
  display: block;
  width: 100%;
  height: 100%;
}
.tiles text {
  font-family: 'Noto Sans', 'Open Sans', sans-serif;
  text-anchor: middle;
  paint-order: stroke;
  stroke: rgba(255, 255, 255, 0.7);
  stroke-width: 8px;
  stroke-linejoin: round;
}
.road-names text {
  font-size: 54px;
  fill: #333;
}
.tiles text.start {
  text-anchor: start;
}
.place text {
  font-size: 72px;
  font-style: italic;
  fill: #77773c;
}
.minor text {
  font-size: 60px;
}
.future text {
  fill: #76766a;
}
.zoom {
  position: absolute;
  left: 20px;
  top: 20px;
  width: 68px;
  border: 4px solid rgba(0, 0, 0, 0.2);
  border-radius: 8px;
  background-clip: padding-box;
  overflow: hidden;
}
.zoom button {
  display: block;
  width: 60px;
  height: 60px;
  padding: 6px 0 0;
  background: #fff;
  color: #000;
  font: bold 48px/48px 'Liberation Sans', sans-serif;
}
.zoom button + button {
  border-top: 2px solid #ccc;
}
</style>
